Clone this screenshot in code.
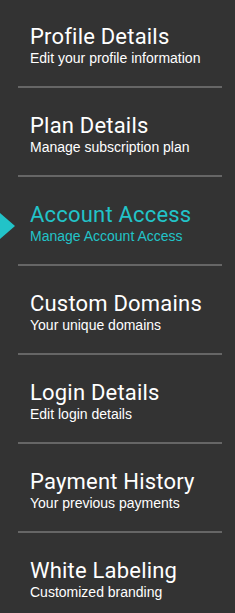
const ITEMS = [
  { title: "Profile Details", sub: "Edit your profile information" },
  { title: "Plan Details", sub: "Manage subscription plan" },
  { title: "Account Access", sub: "Manage Account Access", active: true },
  { title: "Custom Domains", sub: "Your unique domains" },
  { title: "Login Details", sub: "Edit login details" },
  { title: "Payment History", sub: "Your previous payments" },
  { title: "White Labeling", sub: "Customized branding" },
];

export default function App() {
  return (
    <div className="min-h-[613px] w-[235px] bg-[#333333]">
      {ITEMS.map((item, i) => (
        <div key={item.title}>
          <div className="relative pt-[25px] pb-[19px] pl-[30px]">
            {item.active && (
              <svg
                className="absolute left-0 top-[35px]"
                width="15"
                height="26"
                viewBox="0 0 15 26"
              >
                <polygon points="0,0 15,13 0,26" fill="#22c3c8" />
              </svg>
            )}
            <div
              className={`font-['Roboto',sans-serif] text-[22px] leading-[24px] tracking-[0.2px] ${
                item.active ? "text-[#22c3c8]" : "text-white"
              }`}
            >
              {item.title}
            </div>
            <div
              className={`mt-px font-['Liberation_Sans',Arial,sans-serif] text-[14px] leading-[17px] ${
                item.active ? "text-[#22c3c8]" : "text-white"
              }`}
            >
              {item.sub}
            </div>
          </div>
          {i < ITEMS.length - 1 && (
            <div className="mx-[18px] mb-px h-[2px] w-[204px] bg-[#666666]" />
          )}
        </div>
      ))}
    </div>
  );
}
